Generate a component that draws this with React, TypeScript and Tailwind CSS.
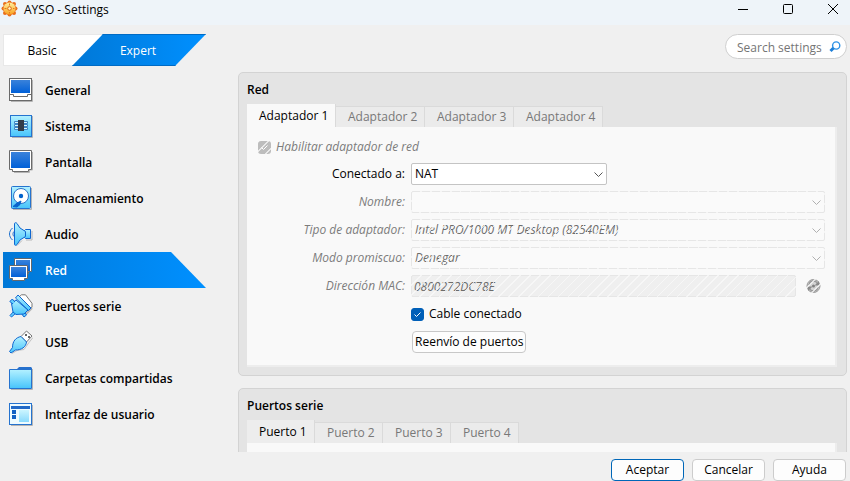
import React, { useState } from "react";

const BLUE = "#0f66d0";

function Defs() {
  return (
    <svg width="0" height="0" className="absolute" aria-hidden="true">
      <defs>
        <linearGradient id="cyan" x1="0" y1="0" x2="0" y2="1">
          <stop offset="0" stopColor="#b4f1ff" />
          <stop offset="1" stopColor="#46c4fb" />
        </linearGradient>
        <linearGradient id="screen" x1="0" y1="0" x2="0" y2="1">
          <stop offset="0" stopColor="#3a82da" />
          <stop offset="1" stopColor="#0060d8" />
        </linearGradient>
        <linearGradient id="sun" x1="0" y1="0" x2="0" y2="1">
          <stop offset="0" stopColor="#fff0a0" />
          <stop offset="1" stopColor="#f9a21f" />
        </linearGradient>
      </defs>
    </svg>
  );
}

function Icon({ children }: { children: React.ReactNode }) {
  return (
    <svg width="24" height="24" viewBox="0 0 24 24" fill="none" className="shrink-0" aria-hidden="true">
      {children}
    </svg>
  );
}

const icons = {
  general: (
    <Icon>
      <path d="M2 23.500h21.500V2" stroke="#b4b4b4" />
      <rect x=".5" y=".5" width="22" height="22" fill="#fff" stroke="#6a6a6a" />
      <rect x="2" y="2" width="19" height="13" fill="url(#screen)" />
      <path d="M1 16.500h3.500v2h14v-2H22" stroke="#6a6a6a" />
    </Icon>
  ),
  system: (
    <Icon>
      <path d="M3 23.500h20.500V2" stroke="#b4b4b4" />
      <rect x="1.500" y="1.500" width="21" height="21" fill="url(#cyan)" stroke="#2573cf" />
      <path d="M5.500 7.500h13v2h-13zM5.500 10.500h13v2h-13zM5.500 13.500h13v2h-13z" fill="#d9f7ff" stroke="#3d83c4" />
      <rect x="9" y="6" width="6" height="11" fill="#333b49" />
    </Icon>
  ),
  display: (
    <Icon>
      <path d="M23.500 2v18h-3v2.500H5" stroke="#b4b4b4" />
      <path d="M.5.5h22v19h-3v2h-16v-2h-3z" fill="#fff" stroke="#6a6a6a" />
      <rect x="2" y="2" width="19" height="16" fill="url(#screen)" />
    </Icon>
  ),
  storage: (
    <Icon>
      <path d="M4 23.500h18.500V2" stroke="#b4b4b4" />
      <rect x="2.500" y=".5" width="19" height="22" rx="1" fill="url(#cyan)" stroke="#2573cf" />
      <circle cx="12" cy="10" r="7.500" fill="#fff" stroke="#2a72c8" />
      <circle cx="12" cy="10" r="2.200" fill="#0062cc" />
      <path d="M12 15l-4 2-4 3.500 4 .5 3-2.500z" fill="#0a64cc" stroke="#0a64cc" />
    </Icon>
  ),
  audio: (
    <Icon>
      <path d="M8 23.500l5-5M17 18h6V9" stroke="#b8b8b8" />
      <path d="M3.500 6c-4 3.500-4 8.500 0 12M5.500 9c-2 1.500-2 4.500 0 6" stroke="#1c6fcb" />
      <path d="M15.500 8.500l1-1h5v9h-5l-1-1z" fill="url(#cyan)" stroke={BLUE} />
      <path d="M5.500 1.500c0-1 2-1 2.500 0L11 6l5.500 3.500v5L11 18l-3 4.500c-.5 1-2.500 1-2.500 0z" fill="url(#cyan)" stroke={BLUE} />
    </Icon>
  ),
  network: (
    <Icon>
      <path d="M5.500.5h17v13h-3v2h-14z" fill="#fff" stroke="#62676d" />
      <path d="M7 2h14v11H7z" fill="url(#screen)" />
      <path d="M.5 7.500h18v13h-3v2h-12v-2h-3z" fill="#fff" stroke="#62676d" />
      <rect x="2" y="9" width="15" height="10" fill="url(#screen)" />
    </Icon>
  ),
  serial: (
    <Icon>
      <path d="M12.500.8h4l6.500 8.500v4l-3 1L10 3z" fill="#fff" stroke="#777" />
      <path d="M16 21l7-7" stroke="#b4b4b4" strokeWidth="2" />
      <path d="M5 17l-4 4.500 1.500 1.500L7 19M12 19l3 4 2.500-2-2.500-3.500" fill="#62cfff" stroke={BLUE} />
      <path d="M7 6L2.500 9.500 4 18l3 2.500 8-.5 4-4z" fill="url(#cyan)" stroke={BLUE} />
      <path d="M9 1l13 13-2.500 2.500L6.500 4z" fill="url(#cyan)" stroke={BLUE} />
      <path d="M4 10L.8 7.500l2.500-2.500L6 8" fill="#62cfff" stroke={BLUE} />
    </Icon>
  ),
  usb: (
    <Icon>
      <path d="M3 23.500l5-3 7-1 5-7 4-5" stroke="#c0c0c0" />
      <path d="M12 6.500L17.500 1 23 6l-5.500 6z" fill="#fff" stroke="#777" />
      <path d="M16 4h2v2h-2zM19 6h2v2h-2z" fill="#666" />
      <path d="M12 6.500l5.500 5.500c-.5 5-5 8-11 8l-4.500 3-1.500-1.500 3-4C3.500 11 7 7.500 12 6.500z" fill="url(#cyan)" stroke={BLUE} />
    </Icon>
  ),
  folder: (
    <Icon>
      <path d="M2 23.500h21.500V3" stroke="#b4b4b4" />
      <path d="M.5 3.500h22v19H.5z" fill="url(#cyan)" stroke="#2573cf" />
      <path d="M7 4l3-3h12l1 1v2z" fill="#2771cd" />
    </Icon>
  ),
  ui: (
    <Icon>
      <path d="M2 23.500h21.500V3" stroke="#b4b4b4" />
      <rect x=".5" y="1.500" width="22" height="21" fill="#eefbff" stroke="#2573cf" />
      <rect x="2" y="4" width="19" height="3" fill="#2169c7" />
      <path d="M3 8h4v4H3zM3 13h4v4H3z" fill="#1261c4" />
      <rect x="10" y="8" width="10" height="12" fill="url(#cyan)" opacity=".6" />
    </Icon>
  ),
};

const sections = [
  { label: "General", icon: icons.general },
  { label: "Sistema", icon: icons.system },
  { label: "Pantalla", icon: icons.display },
  { label: "Almacenamiento", icon: icons.storage },
  { label: "Audio", icon: icons.audio },
  { label: "Red", icon: icons.network },
  { label: "Puertos serie", icon: icons.serial },
  { label: "USB", icon: icons.usb },
  { label: "Carpetas compartidas", icon: icons.folder },
  { label: "Interfaz de usuario", icon: icons.ui },
];

function TitleBar() {
  return (
    <header className="flex h-[25px] shrink-0 items-start bg-[#eef4f9] pr-3">
      <svg width="18" height="18" viewBox="0 0 18 18" className="ml-px shrink-0" aria-hidden="true">
        <g fill="#e96f1b">
          <circle cx="8.500" cy="8.500" r="6.500" />
          <circle cx="8.500" cy="2.500" r="2" /><circle cx="13" cy="4" r="2" />
          <circle cx="14.500" cy="8.500" r="2" /><circle cx="13" cy="13" r="2" />
          <circle cx="8.500" cy="14.500" r="2" /><circle cx="4" cy="13" r="2" />
          <circle cx="2.500" cy="8.500" r="2" /><circle cx="4" cy="4" r="2" />
        </g>
        <circle cx="8.500" cy="8.500" r="6" fill="url(#sun)" />
        <circle cx="8.500" cy="8.500" r="1.800" fill="#fff3c0" stroke="#dc6712" />
        <path d="M8.500 3.500v2M8.500 12v1.500M3.500 8.500h2M12 8.500h1.500" stroke="#e77a1b" />
      </svg>
      <h1 className="ml-[5px] flex-1 text-[12px] leading-5">AYSO - Settings</h1>
      <div className="flex h-[18px] items-center gap-[35px]">
        <button aria-label="Minimizar">
          <svg width="10" height="10" className="block"><path d="M0 5.500h10" stroke="#000" /></svg>
        </button>
        <button aria-label="Maximizar">
          <svg width="10" height="10" className="block"><rect x=".5" y=".5" width="9" height="9" rx="1" fill="none" stroke="#000" /></svg>
        </button>
        <button aria-label="Cerrar">
          <svg width="10" height="10" className="block"><path d="M0 0l10 10M10 0L0 10" stroke="#000" /></svg>
        </button>
      </div>
    </header>
  );
}

function ModeBar() {
  return (
    <div className="flex h-[38px] shrink-0 items-start justify-between px-[3px]">
      <div className="flex h-8">
        <button className="w-[103px] border border-r-0 border-[#e8e8e8] bg-white pt-0.5 pr-[26px] [clip-path:polygon(0_0,100%_0,69px_100%,0_100%)]">
          Basic
        </button>
        <button className="-ml-[34px] w-[134px] bg-linear-to-r from-[#0078d7] to-[#0090ff] pt-0.5 pr-0.5 text-white shadow-[inset_0_1px_0_#006bc4,inset_0_-1px_0_#006bc4] [clip-path:polygon(31px_0,100%_0,103px_100%,0_100%)]">
          Expert
        </button>
      </div>
      <div className="flex h-[25px] w-[122px] items-center rounded-full border border-[#cfcfcf] bg-white pl-[11px]">
        <input
          type="text"
          aria-label="Search settings"
          placeholder="Search settings"
          className="w-0 flex-1 pt-0.5 outline-none placeholder:text-[#757575]"
        />
        <svg width="12" height="12" viewBox="0 0 12 12" className="mr-[5px] shrink-0" aria-hidden="true">
          <circle cx="7.200" cy="4.500" r="3.600" fill="#fff" stroke="#2f93e6" strokeWidth="1.400" />
          <path d="M4.500 7L1.500 10" stroke="#1d7fd8" strokeWidth="3" />
        </svg>
      </div>
    </div>
  );
}

function Sidebar() {
  const [current, setCurrent] = useState("Red");
  return (
    <nav className="w-[206px] shrink-0 pl-[3px]">
      {sections.map(({ label, icon }) => (
        <button
          key={label}
          onClick={() => setCurrent(label)}
          className={
            "flex h-9 w-full items-center gap-3 pl-1.5 text-left font-semibold " +
            (current === label
              ? "bg-linear-to-r from-[#0078d7] to-[#0090ff] text-white [clip-path:polygon(0_0,168px_0,100%_100%,0_100%)]"
              : "")
          }
        >
          {icon}
          <span className="pt-0.5">{label}</span>
        </button>
      ))}
    </nav>
  );
}

function Tabs({ names, muted }: { names: string[]; muted?: boolean }) {
  const [active, setActive] = useState(names[0]);
  return (
    <div role="tablist" className="flex h-[23px] items-end">
      {names.map((name) => (
        <button
          key={name}
          role="tab"
          aria-selected={active === name}
          onClick={() => setActive(name)}
          className={
            "border-r border-[#dadada] pl-3 text-left whitespace-nowrap " +
            (muted ? "w-[68px] " : "w-[89px] ") +
            (active === name
              ? "h-[23px] " + (muted ? "bg-[#ededed]" : "bg-[#f9f9f9]")
              : "h-[21px] border-t bg-[#ebebeb] text-[#787878]")
          }
        >
          {name}
        </button>
      ))}
    </div>
  );
}

/* Diagonal hatching laid over disabled controls. */
function Hatch() {
  return (
    <span className="pointer-events-none absolute inset-0 bg-[repeating-linear-gradient(135deg,#fafafab8_0_1px,transparent_1px_7px)]" />
  );
}

function Label({ id, children, disabled }: { id: string; children: string; disabled?: boolean }) {
  return (
    <label htmlFor={id} className={"text-right " + (disabled ? "text-[#7c7c7c] italic" : "")}>
      {children}
    </label>
  );
}

function Select({ id, value, disabled }: { id: string; value: string; disabled?: boolean }) {
  return (
    <div className={"relative h-[22px] " + (disabled ? "w-full" : "w-[196px]")}>
      <select
        id={id}
        disabled={disabled}
        className={
          "h-full w-full appearance-none rounded-xs border pl-[3px] opacity-100 " +
          (disabled ? "border-[#e6e6e6] bg-[#fafafa] text-[#6c6c6c] italic" : "border-[#c4c4c4] bg-white")
        }
      >
        <option>{value}</option>
      </select>
      {disabled && <Hatch />}
      <svg width="9" height="6" viewBox="0 0 9 6" className="pointer-events-none absolute top-[9px] right-[4px]" aria-hidden="true">
        <path d="M.5.500l4 4 4-4" fill="none" stroke={disabled ? "#b0b0b0" : "#555"} />
      </svg>
    </div>
  );
}

function Panel({ title, children }: { title: string; children: React.ReactNode }) {
  return (
    <section className="shrink-0 rounded-[5px] border border-[#d3d3d3] bg-[#e4e4e4] pr-2 pb-2 pl-2">
      <h2 className="pt-2 pb-[5px] leading-[18px] font-semibold">{title}</h2>
      {children}
    </section>
  );
}

function NetworkForm() {
  return (
    <div className="mr-px h-60 border-r-2 border-b-2 border-r-[#ededed] border-b-[#ededed] bg-[#f9f9f9] pt-[11px] pr-[10px] pl-[11px]">
      <label className="flex h-[18px] w-fit items-center gap-[5px] text-[#7c7c7c] italic">
        <input type="checkbox" checked disabled readOnly className="peer sr-only" />
        <span className="relative h-[13px] w-[13px] rounded-[3px] bg-[#bdbdbd]">
          <svg width="13" height="13" viewBox="0 0 13 13" className="block" aria-hidden="true">
            <path d="M3.500 6.500l2 2 4-4" fill="none" stroke="#fff" />
          </svg>
          <Hatch />
        </span>
        Habilitar adaptador de red
      </label>
      <div className="mt-[7px] grid grid-cols-[147px_1fr] items-center gap-[6px]">
        <Label id="attached">Conectado a:</Label>
        <Select id="attached" value="NAT" />
        <Label id="name" disabled>Nombre:</Label>
        <Select id="name" value="" disabled />
        <Label id="type" disabled>Tipo de adaptador:</Label>
        <Select id="type" value="Intel PRO/1000 MT Desktop (82540EM)" disabled />
        <Label id="promiscuous" disabled>Modo promiscuo:</Label>
        <Select id="promiscuous" value="Denegar" disabled />
        <Label id="mac" disabled>Dirección MAC:</Label>
        <div className="flex items-center">
          <div className="relative h-[22px] flex-1">
            <input
              id="mac"
              type="text"
              disabled
              value="0800272DC78E"
              className="h-full w-full rounded-xs border border-[#e6e6e6] bg-[#efefef] pl-[2px] text-[#6c6c6c] italic"
            />
            <Hatch />
          </div>
          <button disabled aria-label="Generar dirección MAC" className="relative mr-[4px] ml-[10px]">
            <svg width="15" height="16" viewBox="0 0 15 16" className="block" aria-hidden="true">
              <circle cx="7.500" cy="8" r="6.500" fill="#d4d4d4" stroke="#999" />
              <path d="M3 7a4.500 4.500 0 018.500-1.500M12 9a4.500 4.500 0 01-8.500 1.500" fill="none" stroke="#9a9a9a" strokeWidth="1.500" />
              <path d="M13 3v4.500H8.500zM2 13V8.500h4.500z" fill="#8a8a8a" />
              <circle cx="7.500" cy="8" r="1.500" fill="#808080" />
            </svg>
            <Hatch />
          </button>
        </div>
        <span />
        <label className="flex h-[22px] w-fit items-center gap-[5px]">
          <input type="checkbox" defaultChecked className="peer sr-only" />
          <span className="h-[13px] w-[13px] rounded-[3px] border border-[#005fb8] bg-white peer-checked:bg-[#005fb8]">
            <svg width="11" height="11" viewBox="0 0 11 11" className="block" aria-hidden="true">
              <path d="M2.500 5.500l2 2 4-4" fill="none" stroke="#fff" />
            </svg>
          </span>
          Cable conectado
        </label>
        <span />
        <button className="ml-px h-[22px] w-fit rounded-[4px] border border-[#c8c8c8] bg-[#fdfdfd] px-0.5 whitespace-nowrap">
          Reenvío de puertos
        </button>
      </div>
    </div>
  );
}

export default function App() {
  return (
    <div className="flex h-screen flex-col overflow-hidden bg-[#f0f0f0] font-['Open_Sans','Noto_Sans',sans-serif] text-[12px] leading-4 text-black">
      <Defs />
      <TitleBar />
      <div className="h-[9px] shrink-0" />
      <ModeBar />
      <div className="flex min-h-0 flex-1">
        <Sidebar />
        <main className="mr-[3px] ml-8 flex flex-1 flex-col gap-3 overflow-hidden">
          <Panel title="Red">
            <Tabs names={["Adaptador 1", "Adaptador 2", "Adaptador 3", "Adaptador 4"]} />
            <NetworkForm />
          </Panel>
          <Panel title="Puertos serie">
            <Tabs names={["Puerto 1", "Puerto 2", "Puerto 3", "Puerto 4"]} muted />
            <div className="mr-px h-60 border-r-2 border-[#ededed] bg-[#f9f9f9]" />
          </Panel>
        </main>
      </div>
      <footer className="flex shrink-0 justify-end gap-2 pt-[7px] pr-1">
        <button className="h-[22px] w-[73px] rounded-[4px] border border-[#0067b8] bg-[#fdfdfd]">Aceptar</button>
        <button className="h-[22px] w-[73px] rounded-[4px] border border-[#cccccc] bg-[#fdfdfd]">Cancelar</button>
        <button className="h-[22px] w-[73px] rounded-[4px] border border-[#cccccc] bg-[#fdfdfd]">Ayuda</button>
      </footer>
    </div>
  );
}
